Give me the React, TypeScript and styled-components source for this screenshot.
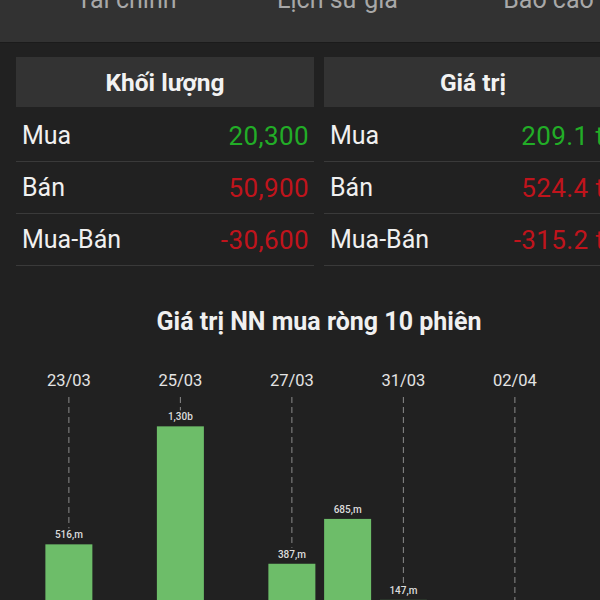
import React from 'react'
import styled, { createGlobalStyle } from 'styled-components'

const GlobalStyle = createGlobalStyle`
  html, body {
    margin: 0;
    padding: 0;
    background: #212121;
    overflow: hidden;
    font-family: Roboto, "Noto Sans", sans-serif;
  }
`

const Page = styled.div`
  width: 600px;
  height: 600px;
  overflow: hidden;
  background: #212121;
`

const TopBar = styled.div`
  height: 42px;
  background: #323232;
  border-bottom: 1px solid #1b1b1b;
  overflow: hidden;
`

const TabRow = styled.div`
  display: flex;
  padding-left: 21px;
  margin-top: -13px;
`

const Tab = styled.div`
  flex: 0 0 211px;
  text-align: center;
  font-size: 25px;
  line-height: 25px;
  color: #a8a8a8;
  white-space: nowrap;
`

const Content = styled.div`
  width: 606px;
  margin-left: 16px;
  padding-top: 14px;
`

const Columns = styled.div`
  display: grid;
  grid-template-columns: 298px 298px;
  column-gap: 10px;
`

const Column = styled.div`
  display: flex;
  flex-direction: column;
`

const HeaderCell = styled.div`
  height: 50px;
  background: #333333;
  display: flex;
  align-items: center;
  justify-content: center;
  font-size: 24.5px;
  font-weight: 700;
  color: #f2f2f2;
  margin-bottom: 3px;
`

const Row = styled.div`
  height: 51px;
  display: flex;
  align-items: center;
  justify-content: space-between;
  border-bottom: 1px solid #3a3a3a;
  padding: 0 5px 0 6px;
`

const Label = styled.span`
  font-size: 25px;
  color: #f0f0f0;
`

const Value = styled.span<{ $tone: 'up' | 'down' }>`
  font-size: 26px;
  letter-spacing: 0.4px;
  color: ${({ $tone }) => ($tone === 'up' ? '#22ad27' : '#c0141c')};
  white-space: nowrap;
`

const ChartTitle = styled.div`
  margin-top: 44px;
  text-align: center;
  font-size: 25px;
  line-height: 24px;
  font-weight: 700;
  color: #f0f0f0;
`

const ChartSvg = styled.svg`
  display: block;
  margin-top: 5px;
`

type Stat = { label: string; value: string; tone: 'up' | 'down' }

const volume: Stat[] = [
  { label: 'Mua', value: '20,300', tone: 'up' },
  { label: 'Bán', value: '50,900', tone: 'down' },
  { label: 'Mua-Bán', value: '-30,600', tone: 'down' },
]

const amount: Stat[] = [
  { label: 'Mua', value: '209.1 tỷ', tone: 'up' },
  { label: 'Bán', value: '524.4 tỷ', tone: 'down' },
  { label: 'Mua-Bán', value: '-315.2 tỷ', tone: 'down' },
]

// value in millions; negative sessions fall below the visible area
const sessions = [
  { date: '23/03', value: 516, text: '516,m' },
  { date: '24/03', value: -210, text: '-210,m' },
  { date: '25/03', value: 1300, text: '1,30b' },
  { date: '26/03', value: -95, text: '-95,m' },
  { date: '27/03', value: 387, text: '387,m' },
  { date: '30/03', value: 685, text: '685,m' },
  { date: '31/03', value: 147, text: '147,m' },
  { date: '01/04', value: -420, text: '-420,m' },
  { date: '02/04', value: -180, text: '-180,m' },
  { date: '03/04', value: -260, text: '-260,m' },
]

const SLOT = 55.75
const LEFT = 25
const BAR_W = 47
const BASE = 283
const SCALE = 0.1505
const CHART_H = 330

const StatColumn = ({ title, items }: { title: string; items: Stat[] }) => (
  <Column>
    <HeaderCell>{title}</HeaderCell>
    {items.map((s) => (
      <Row key={s.label}>
        <Label>{s.label}</Label>
        <Value $tone={s.tone}>{s.value}</Value>
      </Row>
    ))}
  </Column>
)

const NetChart = () => (
  <ChartSvg width={606} height={CHART_H}>
    {sessions.map((s, i) => {
      const cx = LEFT + SLOT * i + SLOT / 2
      const top = BASE - Math.max(s.value, 0) * SCALE
      const showDate = i % 2 === 0
      const lineEnd = s.value > 0 ? top - 16 : CHART_H
      return (
        <g key={s.date}>
          {showDate && (
            <>
              <text x={cx} y={47} textAnchor="middle" fill="#e4e4e4" fontSize={16.5} fontFamily="Roboto, sans-serif">
                {s.date}
              </text>
              <line x1={cx} y1={58} x2={cx} y2={lineEnd} stroke="#8a8a8a" strokeWidth={1} strokeDasharray="6 4" />
            </>
          )}
          {s.value > 0 && (
            <>
              <rect x={cx - BAR_W / 2} y={top} width={BAR_W} height={BASE - top} fill="#6dbd69" />
              <text x={cx} y={top - 6} textAnchor="middle" fill="#dcdcdc" fontSize={10} fontWeight={500} fontFamily="Roboto, sans-serif">
                {s.text}
              </text>
            </>
          )}
        </g>
      )
    })}
  </ChartSvg>
)

export default function App() {
  return (
    <Page>
      <GlobalStyle />
      <TopBar>
        <TabRow>
          <Tab>Tài chính</Tab>
          <Tab>Lịch sử giá</Tab>
          <Tab>Báo cáo</Tab>
        </TabRow>
      </TopBar>
      <Content>
        <Columns>
          <StatColumn title="Khối lượng" items={volume} />
          <StatColumn title="Giá trị" items={amount} />
        </Columns>
        <ChartTitle>Giá trị NN mua ròng 10 phiên</ChartTitle>
        <NetChart />
      </Content>
    </Page>
  )
}
